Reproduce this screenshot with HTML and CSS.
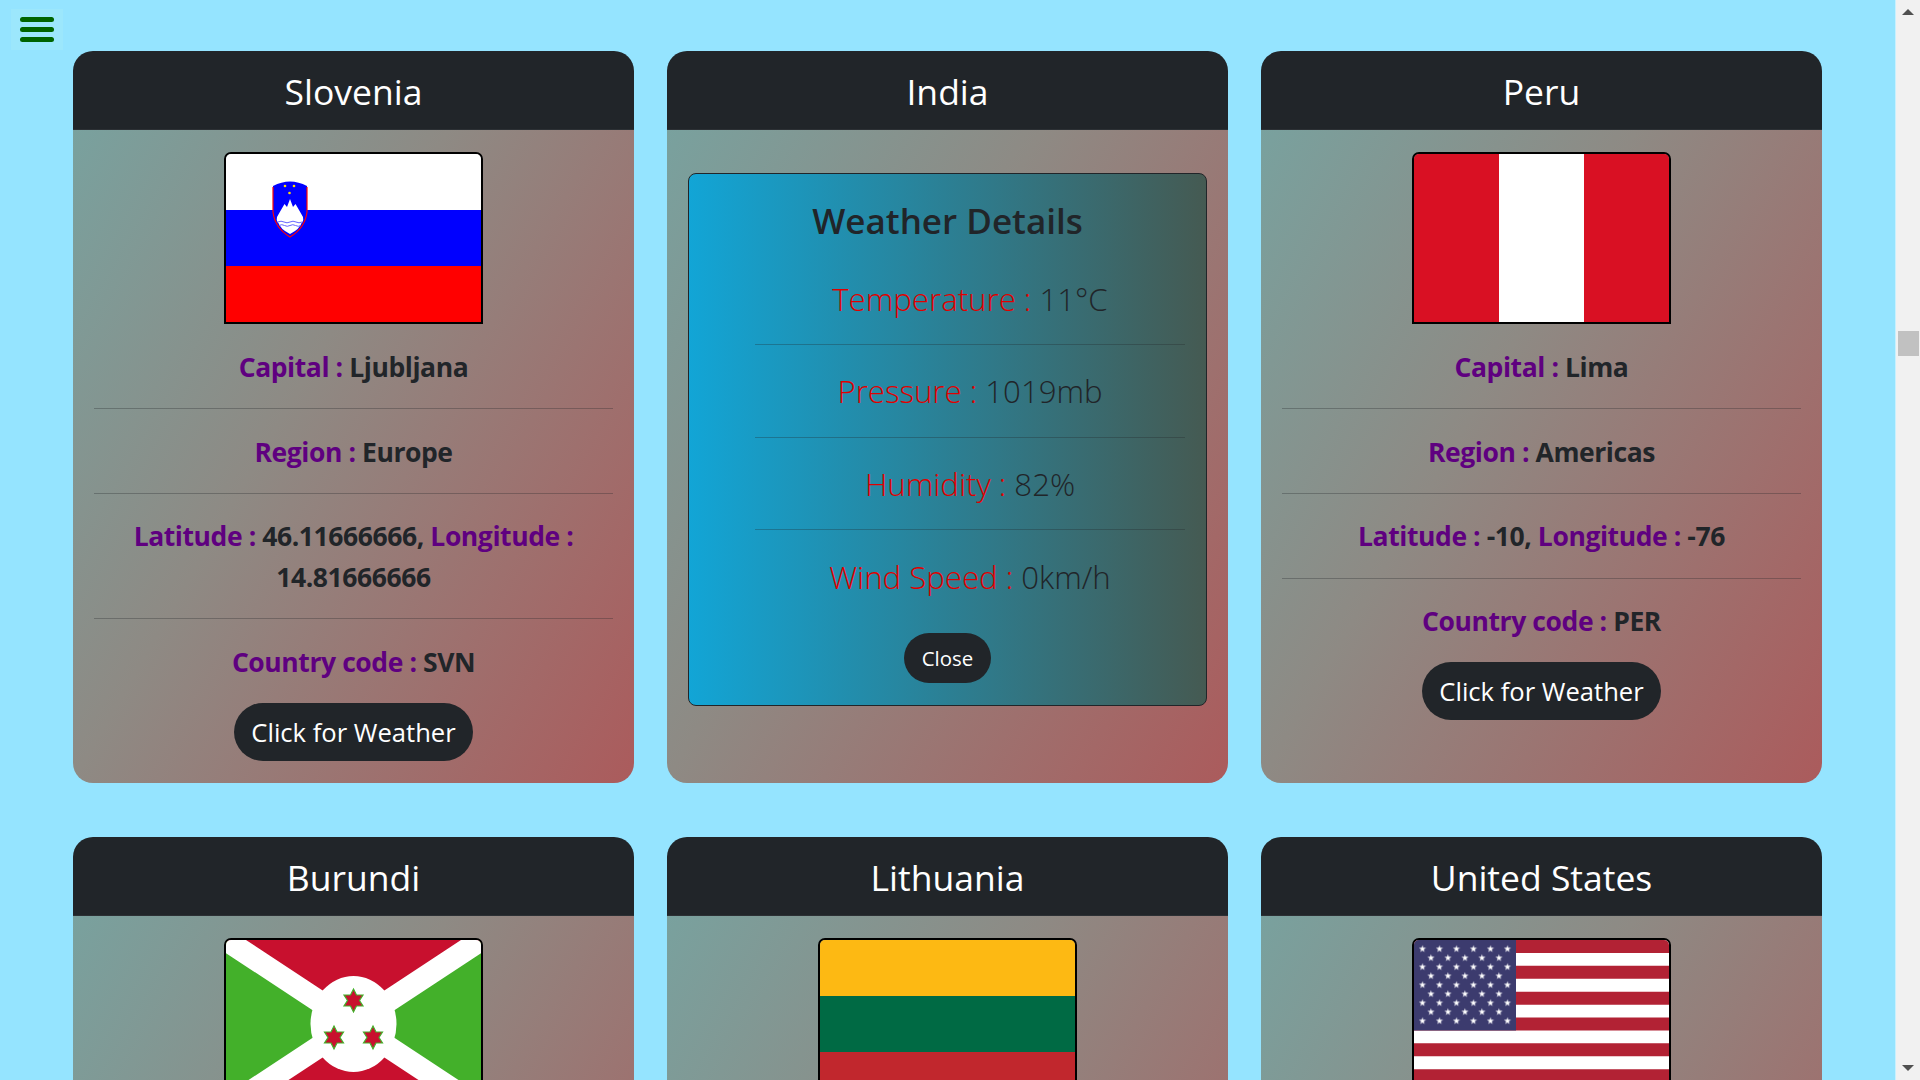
FILE: index.html
```html
<!DOCTYPE html>
<html lang="en">
<head>
<meta charset="utf-8">
<title>Countries</title>
<link rel="stylesheet" href="styles.css">
</head>
<body>
<div class="shell">
  <main class="content">
    <button class="menu" aria-label="Menu"><span></span><span></span><span></span></button>
    <div class="grid">
      <article class="card">
        <h2 class="card-title">Slovenia</h2>
        <div class="card-body">
          <svg class="flag" viewBox="0 0 255 168" preserveAspectRatio="none">
            <rect width="255" height="168" fill="#fff"/>
            <rect y="56" width="255" height="56" fill="#00f"/>
            <rect y="112" width="255" height="56" fill="#f00"/>
            <path d="M47 32 Q64 23 81 32 L81 58 Q79 74 64 83 Q49 74 47 58 Z" fill="#00f"/>
            <path d="M47 33 L47 58 Q49 74 64 83 Q79 74 81 58 L81 33" fill="none" stroke="#f00" stroke-width="1.200"/>
            <path d="M64 45 L67 53 L69.500 50 L73 56 L77 63 Q78 66 76 69 L52 69 Q50 66 51 63 L55 56 L58.500 50 L61 53 Z" fill="#fff"/>
            <path d="M52 68 H76 Q74 75 64 80 Q54 75 52 68 Z" fill="#fff"/>
            <path d="M52 68 q3 -1.600 6 0 t6 0 t6 0 t6 0 M53 71.500 q2.750 -1.600 5.500 0 t5.500 0 t5.500 0 t5.500 0" fill="none" stroke="#66f" stroke-width="1"/>
            <circle cx="59" cy="32" r="1.300" fill="#fd0"/><circle cx="68" cy="32" r="1.300" fill="#fd0"/><circle cx="63.500" cy="39" r="1.300" fill="#fd0"/>
          </svg>
          <p class="fact"><b>Capital : </b>Ljubljana</p>
          <hr class="rule">
          <p class="fact"><b>Region : </b>Europe</p>
          <hr class="rule">
          <p class="fact"><b>Latitude : </b>46.11666666, <b>Longitude : </b>14.81666666</p>
          <hr class="rule">
          <p class="fact"><b>Country code : </b>SVN</p>
          <button class="btn">Click for Weather</button>
        </div>
      </article>

      <article class="card">
        <h2 class="card-title">India</h2>
        <div class="card-body">
          <section class="weather">
            <h3 class="weather-title">Weather Details</h3>
            <div class="weather-list">
              <p class="reading"><span>Temperature : </span>11°C</p>
              <hr class="rule thin">
              <p class="reading"><span>Pressure : </span>1019mb</p>
              <hr class="rule thin">
              <p class="reading"><span>Humidity : </span>82%</p>
              <hr class="rule thin">
              <p class="reading"><span>Wind Speed : </span>0km/h</p>
            </div>
            <button class="btn small">Close</button>
          </section>
        </div>
      </article>

      <article class="card">
        <h2 class="card-title">Peru</h2>
        <div class="card-body">
          <svg class="flag" viewBox="0 0 3 1" preserveAspectRatio="none">
            <rect width="3" height="1" fill="#d91023"/>
            <rect x="1" width="1" height="1" fill="#fff"/>
          </svg>
          <p class="fact"><b>Capital : </b>Lima</p>
          <hr class="rule">
          <p class="fact"><b>Region : </b>Americas</p>
          <hr class="rule">
          <p class="fact"><b>Latitude : </b>-10, <b>Longitude : </b>-76</p>
          <hr class="rule">
          <p class="fact"><b>Country code : </b>PER</p>
          <button class="btn">Click for Weather</button>
        </div>
      </article>

      <article class="card">
        <h2 class="card-title">Burundi</h2>
        <div class="card-body">
          <svg class="flag" viewBox="0 0 255 168" preserveAspectRatio="none">
            <rect width="255" height="168" fill="#c8102e"/>
            <path d="M0 0 L127.500 84 L0 168 Z M255 0 L127.500 84 L255 168 Z" fill="#43b02a"/>
            <path d="M0 0 L255 168 M255 0 L0 168" stroke="#fff" stroke-width="22"/>
            <ellipse cx="127.500" cy="84" rx="43" ry="48" fill="#fff"/>
            <g fill="#c8102e" stroke="#43b02a" stroke-width="1.200">
              <path d="M127.500 49 l3 6 h6.500 l-3.500 5.500 3.500 5.500 h-6.500 l-3 6 -3 -6 h-6.500 l3.500 -5.500 -3.500 -5.500 h6.500 Z"/>
              <path d="M108 86 l3 6 h6.500 l-3.500 5.500 3.500 5.500 h-6.500 l-3 6 -3 -6 h-6.500 l3.500 -5.500 -3.500 -5.500 h6.500 Z"/>
              <path d="M147 86 l3 6 h6.500 l-3.500 5.500 3.500 5.500 h-6.500 l-3 6 -3 -6 h-6.500 l3.500 -5.500 -3.500 -5.500 h6.500 Z"/>
            </g>
          </svg>
        </div>
      </article>

      <article class="card">
        <h2 class="card-title">Lithuania</h2>
        <div class="card-body">
          <svg class="flag" viewBox="0 0 3 3" preserveAspectRatio="none">
            <rect width="3" height="1" fill="#fdb913"/>
            <rect y="1" width="3" height="1" fill="#006a44"/>
            <rect y="2" width="3" height="1" fill="#c1272d"/>
          </svg>
        </div>
      </article>

      <article class="card">
        <h2 class="card-title">United States</h2>
        <div class="card-body">
          <svg class="flag" viewBox="0 0 255 168" preserveAspectRatio="none">
            <defs>
              <pattern id="usstars" x="4.250" y="4.500" width="17" height="18" patternUnits="userSpaceOnUse">
                <path d="M4.250 .8 l.83 2.560 h2.690 l-2.170 1.580 .82 2.560 -2.170 -1.590 -2.170 1.590 .82 -2.560 -2.170 -1.580 h2.690 Z" fill="#fff"/>
                <path d="M12.750 9.800 l.83 2.560 h2.690 l-2.170 1.580 .82 2.560 -2.170 -1.590 -2.170 1.590 .82 -2.560 -2.170 -1.580 h2.690 Z" fill="#fff"/>
              </pattern>
            </defs>
            <rect width="255" height="168" fill="#fff"/>
            <path d="M0 6.500 H255 M0 32.300 H255 M0 58.200 H255 M0 84 H255 M0 109.800 H255 M0 135.700 H255 M0 161.500 H255" stroke="#b22234" stroke-width="12.920"/>
            <rect width="102" height="90.500" fill="#3c3b6e"/>
            <rect x="4.250" y="4.500" width="93.500" height="81" fill="url(#usstars)"/>
          </svg>
        </div>
      </article>
    </div>
  </main>
  <aside class="scrollbar" aria-hidden="true">
    <span class="arrow up"></span>
    <span class="track"><span class="thumb"></span></span>
    <span class="arrow down"></span>
  </aside>
</div>
</body>
</html>
```

FILE: styles.css
```css
* { box-sizing: border-box; }
html, body { margin: 0; height: 100%; overflow: hidden; }
body {
  font-family: "Open Sans", "Noto Sans", sans-serif;
  color: #212529;
  background: #95e4ff;
}
.shell { display: flex; height: 100vh; overflow: hidden; }
.content {
  position: relative;
  flex: 1;
  min-width: 0;
  padding: 51px 73px 0;
  overflow: hidden;
  border-right: 1px solid #c8f1ff;
}
.menu {
  position: absolute;
  left: 11px;
  top: 9px;
  width: 52px;
  height: 41px;
  padding: 8px 9px;
  border: 0;
  background: #9ce7fc;
  display: flex;
  flex-direction: column;
  gap: 5px;
}
.menu span { display: block; height: 6px; border-radius: 3px; background: #006400; }
.grid {
  display: grid;
  grid-template-columns: repeat(3, 561px);
  grid-auto-rows: 732px;
  column-gap: 33px;
  row-gap: 54px;
}
.card {
  display: flex;
  flex-direction: column;
  border-radius: 20px;
  overflow: hidden;
}
.card-title {
  margin: 0;
  height: 79px;
  line-height: 80px;
  background: #212529;
  color: #fff;
  text-align: center;
  font-size: 35.5px;
  font-weight: 400;
  border-bottom: 1px solid #2c3034;
}
.card-body {
  flex: 1;
  padding: 22px 21px;
  text-align: center;
  background: linear-gradient(120deg, #79a19e 0%, #8e8a84 40%, #ab5b5c 100%);
}
.flag {
  display: block;
  width: 259px;
  height: 172px;
  margin: 0 auto 23px;
  border: 2px solid #000;
  border-radius: 7px 7px 0 0;
}
.fact {
  margin: 0 0 20.4px;
  font-size: 26.5px;
  line-height: 40.8px;
  font-weight: 700;
  letter-spacing: -0.42px;
}
.fact b { font-weight: 700; color: #5f0080; }
.rule {
  margin: 0 0 22.5px;
  border: 0;
  height: 1px;
  background: rgba(33, 37, 41, 0.3);
}
.btn {
  display: block;
  margin: 0 auto;
  width: 239px;
  height: 58px;
  padding: 0;
  border: 0;
  border-radius: 29px;
  background: #212529;
  color: #fff;
  font: 400 25.6px "Open Sans", "Noto Sans", sans-serif;
}
.btn.small { width: 87px; height: 50px; border-radius: 25px; font-size: 20.4px; }
.weather {
  margin-top: 21px;
  padding: 20px 21px 22px;
  border: 1px solid #212529;
  border-radius: 8px;
  background: linear-gradient(90deg, #12a5d6 0%, #455a52 100%);
}
.weather-title {
  margin: 0 0 28.5px;
  font-size: 35px;
  line-height: 54px;
  font-weight: 600;
}
.weather-list { margin: 0 0 33px; padding-left: 45px; }
.reading {
  margin: 0 0 22.5px;
  font-size: 31.2px;
  line-height: 45px;
  font-weight: 300;
}
.reading span { color: #e00000; }
.rule.thin { margin-bottom: 24px; }
.rule.thin:nth-last-of-type(1) { margin-bottom: 25px; }
.weather .reading:last-child { margin-bottom: 1px; }
.scrollbar {
  flex: 0 0 24px;
  display: flex;
  flex-direction: column;
  background: #f1f1f1;
  height: 100vh;
}
.arrow { flex: 0 0 24px; display: flex; align-items: center; justify-content: center; }
.arrow::before {
  content: "";
  width: 0;
  height: 0;
  border-left: 6px solid transparent;
  border-right: 6px solid transparent;
}
.arrow.up::before { border-bottom: 6px solid #505050; }
.arrow.down::before { border-top: 6px solid #505050; }
.track { flex: 1; padding-top: 307px; display: flex; justify-content: center; }
.thumb { display: block; width: 21px; height: 25px; background: #c1c1c1; }
```
